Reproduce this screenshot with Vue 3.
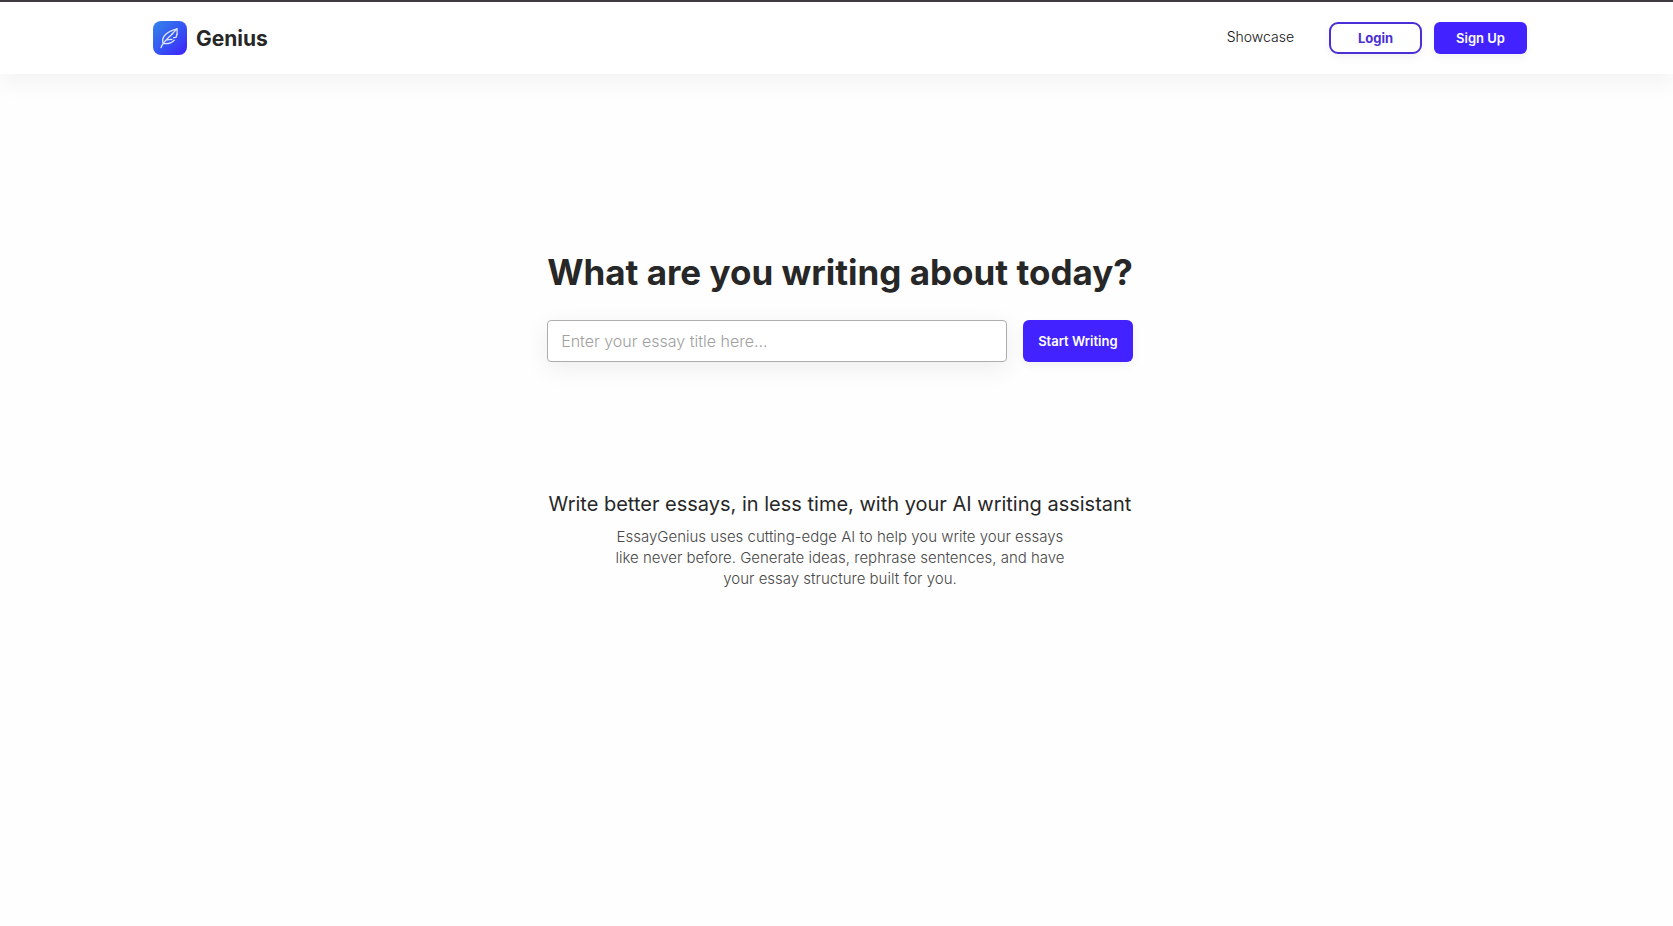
<script setup>
import { ref } from 'vue'

const title = ref('')
</script>

<template>
  <div class="page">
    <header class="bar">
      <a class="brand" href="#">
        <svg class="mark" viewBox="0 0 34 34" aria-hidden="true">
          <defs>
            <linearGradient id="mark-fill" x1="0" y1="0" x2="1" y2="1">
              <stop offset="0" stop-color="#3584ea" />
              <stop offset="0.5" stop-color="#3557f3" />
              <stop offset="1" stop-color="#4020fb" />
            </linearGradient>
          </defs>
          <rect width="34" height="34" rx="8" fill="url(#mark-fill)" />
          <g fill="none" stroke="#dfe6ff" stroke-width="1.3" stroke-linecap="round" stroke-linejoin="round">
            <path d="M8 26.6 C9.2 23 12 19.5 19.5 12.8" />
            <path d="M10 22.2 C8.4 16.4 13 11 24 7.8 C24.6 11 24.2 14 23 16.4 L20.6 16.6 M21.2 19.2 C18.6 22 15 23 11 22.6" />
            <path d="M24 7.8 L18.6 13.6 M14 18.8 L19 18.4" />
          </g>
        </svg>
        <span class="name">Genius</span>
      </a>
      <nav class="nav">
        <a class="link" href="#">Showcase</a>
        <button class="btn outline" type="button">Login</button>
        <button class="btn solid" type="button">Sign Up</button>
      </nav>
    </header>

    <main class="main">
      <section class="hero">
        <h1><label for="essay-title">What are you writing about today?</label></h1>
        <form class="form" @submit.prevent>
          <input id="essay-title" v-model="title" type="text" placeholder="Enter your essay title here..." />
          <button class="start" type="submit">Start Writing</button>
        </form>
      </section>
      <section class="about">
        <h2>Write better essays, in less time, with your AI writing assistant</h2>
        <p>EssayGenius uses cutting-edge AI to help you write your essays like never before. Generate ideas, rephrase sentences, and have your essay structure built for you.</p>
      </section>
    </main>
  </div>
</template>

<style>
body {
  background: #fefefe;
}
</style>

<style scoped>
.page {
  font-family: Inter, "Liberation Sans", sans-serif;
  color: #272727;
}
.bar {
  display: flex;
  align-items: center;
  justify-content: space-between;
  box-sizing: border-box;
  height: 74px;
  padding: 0 146px 0 153px;
  border-top: 2px solid #3d3b3d;
  background: #fff;
  box-shadow: 0 8px 24px rgba(0, 0, 0, 0.05);
}
.brand {
  display: flex;
  align-items: center;
  gap: 9px;
  color: inherit;
  text-decoration: none;
}
.mark {
  width: 34px;
  height: 34px;
}
.name {
  font-size: 21px;
  font-weight: 700;
}
.nav {
  display: flex;
  align-items: center;
  gap: 12px;
}
.link {
  margin-right: 23px;
  padding-bottom: 3px;
  font-size: 14px;
  font-weight: 300;
  color: #111;
  text-decoration: none;
}
.btn {
  box-sizing: border-box;
  width: 93px;
  height: 32px;
  padding: 0;
  font: 600 13px Inter, "Liberation Sans", sans-serif;
  box-shadow: 0 4px 8px rgba(0, 0, 0, 0.05);
}
.outline {
  border: 2px solid #4a2ed6;
  border-radius: 9px;
  background: #fff;
  color: #4a2ed6;
  font-weight: 700;
}
.solid {
  border: 0;
  border-radius: 6px;
  background: #4223ff;
  color: #fff;
}
.main {
  display: flex;
  flex-direction: column;
  align-items: center;
  padding: 174px 0 48px 7px;
}
.hero {
  max-width: 100%;
}
h1 {
  margin: 0;
  font-size: 35px;
  line-height: 48px;
  font-weight: 700;
  text-align: center;
}
.form {
  display: flex;
  gap: 16px;
  margin-top: 24px;
}
input {
  box-sizing: border-box;
  flex: 1;
  min-width: 0;
  height: 42px;
  padding: 0 13px;
  border: 1px solid #adadad;
  border-radius: 4px;
  background: #fff;
  color: #272727;
  font: 300 16px Inter, "Liberation Sans", sans-serif;
  box-shadow: 0 6px 24px rgba(0, 0, 0, 0.07);
}
input::placeholder {
  color: #a0a0a0;
}
.start {
  height: 42px;
  width: 110px;
  padding: 0;
  border: 0;
  border-radius: 6px;
  background: #4223ff;
  color: #fff;
  font: 600 13px Inter, "Liberation Sans", sans-serif;
  box-shadow: 0 4px 10px rgba(0, 0, 0, 0.05);
}
.about {
  display: flex;
  flex-direction: column;
  align-items: center;
  margin-top: 128px;
  text-align: center;
}
h2 {
  margin: 0;
  font-size: 20px;
  line-height: 28px;
  font-weight: 400;
}
p {
  max-width: 464px;
  margin: 8px 0 0;
  font-size: 15px;
  line-height: 21px;
  font-weight: 300;
  color: #484848;
}
</style>
